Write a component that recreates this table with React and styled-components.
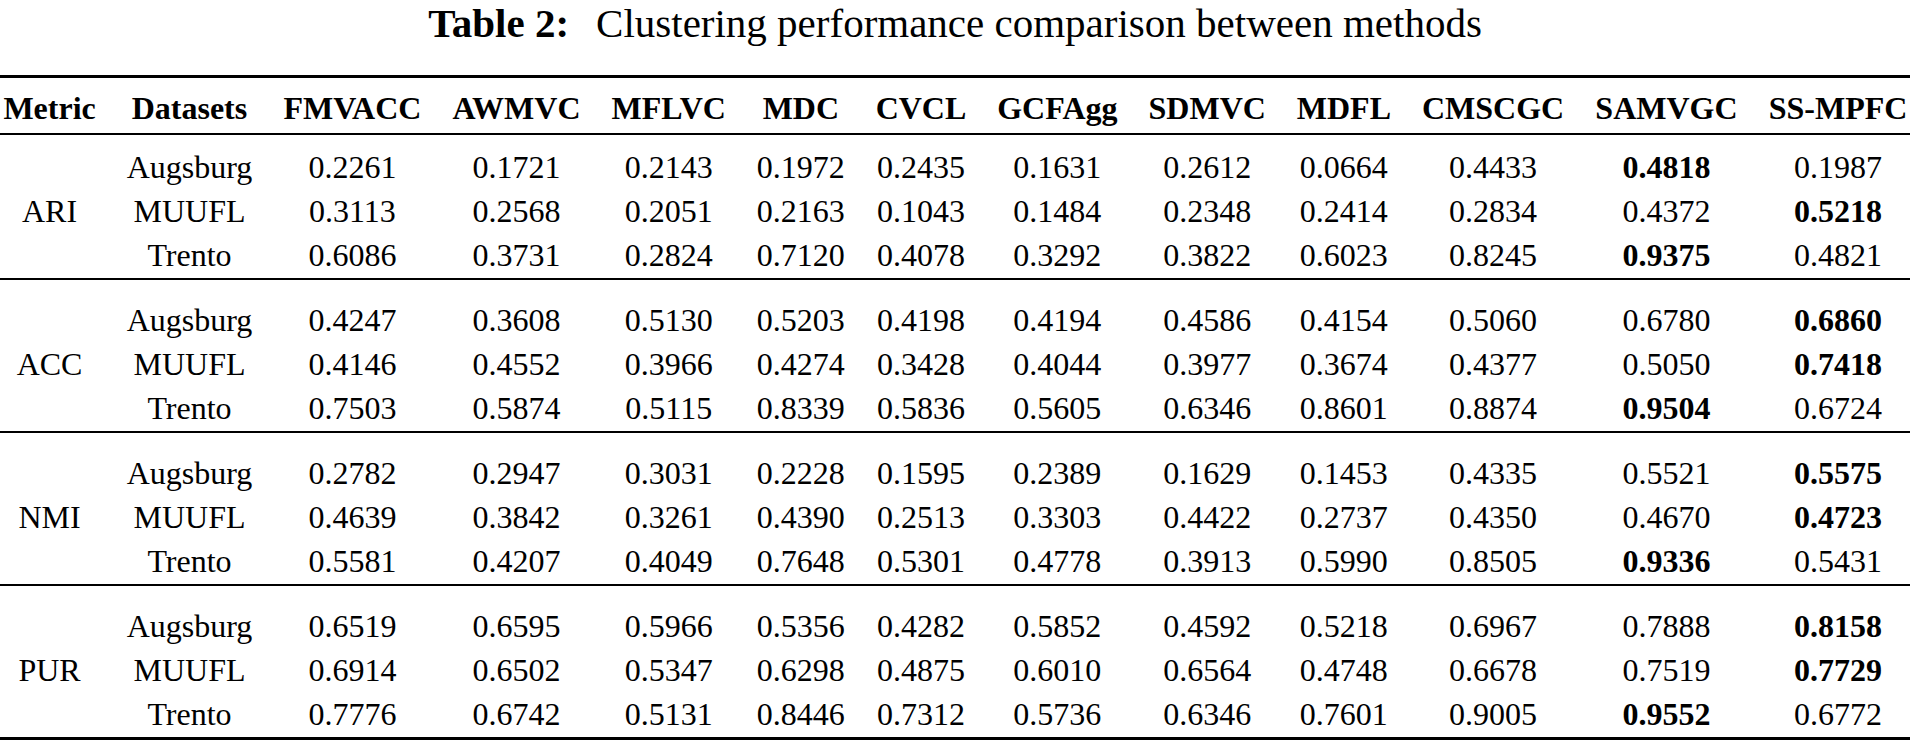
import React from "react";
import styled, { createGlobalStyle } from "styled-components";

const GlobalStyle = createGlobalStyle`
  html, body {
    margin: 0;
    padding: 0;
    background: #ffffff;
  }
  body {
    font-family: "Liberation Serif", "Times New Roman", serif;
    color: #000000;
  }
`;

const Page = styled.div`
  width: 1910px;
  background: #ffffff;
`;

const Caption = styled.div`
  height: 46px;
  margin-bottom: 29px;
  display: flex;
  justify-content: center;
  align-items: center;
  font-size: 41px;
  line-height: 46px;
  white-space: nowrap;
`;

const CaptionLabel = styled.span`
  font-weight: 700;
  margin-right: 27px;
`;

const Table = styled.table`
  width: 100%;
  border-collapse: separate;
  border-spacing: 0;
  font-size: 32px;
  white-space: nowrap;
`;

const HeadCell = styled.th`
  font-weight: 700;
  text-align: center;
  line-height: 36px;
  padding: 12px 15px 7px;
  border-top: 3px solid #000;
  border-bottom: 2px solid #000;
  &:first-child { padding-left: 3px; }
  &:last-child { padding-right: 2px; }
`;

const Cell = styled.td`
  text-align: center;
  line-height: 44px;
  padding: ${(p) => (p.$first ? (p.$groupIndex === 0 ? "10px" : "18px") : "0")} 15px
    ${(p) => (p.$last ? "1px" : "0")};
  font-weight: ${(p) => (p.$bold ? 700 : 400)};
  border-bottom: ${(p) => (p.$last ? (p.$final ? "3px" : "2px") : "0")} solid #000;
  &:first-child { padding-left: 3px; }
  &:last-child { padding-right: 2px; }
`;

const methods = [
  "FMVACC", "AWMVC", "MFLVC", "MDC", "CVCL", "GCFAgg",
  "SDMVC", "MDFL", "CMSCGC", "SAMVGC", "SS-MPFC",
];

const groups = [
  {
    metric: "ARI",
    rows: [
      ["Augsburg", ["0.2261", "0.1721", "0.2143", "0.1972", "0.2435", "0.1631", "0.2612", "0.0664", "0.4433", "0.4818", "0.1987"], 9],
      ["MUUFL", ["0.3113", "0.2568", "0.2051", "0.2163", "0.1043", "0.1484", "0.2348", "0.2414", "0.2834", "0.4372", "0.5218"], 10],
      ["Trento", ["0.6086", "0.3731", "0.2824", "0.7120", "0.4078", "0.3292", "0.3822", "0.6023", "0.8245", "0.9375", "0.4821"], 9],
    ],
  },
  {
    metric: "ACC",
    rows: [
      ["Augsburg", ["0.4247", "0.3608", "0.5130", "0.5203", "0.4198", "0.4194", "0.4586", "0.4154", "0.5060", "0.6780", "0.6860"], 10],
      ["MUUFL", ["0.4146", "0.4552", "0.3966", "0.4274", "0.3428", "0.4044", "0.3977", "0.3674", "0.4377", "0.5050", "0.7418"], 10],
      ["Trento", ["0.7503", "0.5874", "0.5115", "0.8339", "0.5836", "0.5605", "0.6346", "0.8601", "0.8874", "0.9504", "0.6724"], 9],
    ],
  },
  {
    metric: "NMI",
    rows: [
      ["Augsburg", ["0.2782", "0.2947", "0.3031", "0.2228", "0.1595", "0.2389", "0.1629", "0.1453", "0.4335", "0.5521", "0.5575"], 10],
      ["MUUFL", ["0.4639", "0.3842", "0.3261", "0.4390", "0.2513", "0.3303", "0.4422", "0.2737", "0.4350", "0.4670", "0.4723"], 10],
      ["Trento", ["0.5581", "0.4207", "0.4049", "0.7648", "0.5301", "0.4778", "0.3913", "0.5990", "0.8505", "0.9336", "0.5431"], 9],
    ],
  },
  {
    metric: "PUR",
    rows: [
      ["Augsburg", ["0.6519", "0.6595", "0.5966", "0.5356", "0.4282", "0.5852", "0.4592", "0.5218", "0.6967", "0.7888", "0.8158"], 10],
      ["MUUFL", ["0.6914", "0.6502", "0.5347", "0.6298", "0.4875", "0.6010", "0.6564", "0.4748", "0.6678", "0.7519", "0.7729"], 10],
      ["Trento", ["0.7776", "0.6742", "0.5131", "0.8446", "0.7312", "0.5736", "0.6346", "0.7601", "0.9005", "0.9552", "0.6772"], 9],
    ],
  },
];

export default function App() {
  return (
    <Page>
      <GlobalStyle />
      <Caption>
        <CaptionLabel>Table 2:</CaptionLabel>
        <span>Clustering performance comparison between methods</span>
      </Caption>
      <Table>
        <thead>
          <tr>
            <HeadCell>Metric</HeadCell>
            <HeadCell>Datasets</HeadCell>
            {methods.map((m) => (
              <HeadCell key={m}>{m}</HeadCell>
            ))}
          </tr>
        </thead>
        {groups.map((g, gi) => (
          <tbody key={g.metric}>
            {g.rows.map(([ds, vals, best], ri) => {
              const common = {
                $first: ri === 0,
                $last: ri === g.rows.length - 1,
                $final: gi === groups.length - 1,
                $groupIndex: gi,
              };
              return (
                <tr key={ds}>
                  <Cell {...common}>{ri === 1 ? g.metric : ""}</Cell>
                  <Cell {...common}>{ds}</Cell>
                  {vals.map((v, vi) => (
                    <Cell key={vi} {...common} $bold={vi === best}>
                      {v}
                    </Cell>
                  ))}
                </tr>
              );
            })}
          </tbody>
        ))}
      </Table>
    </Page>
  );
}
